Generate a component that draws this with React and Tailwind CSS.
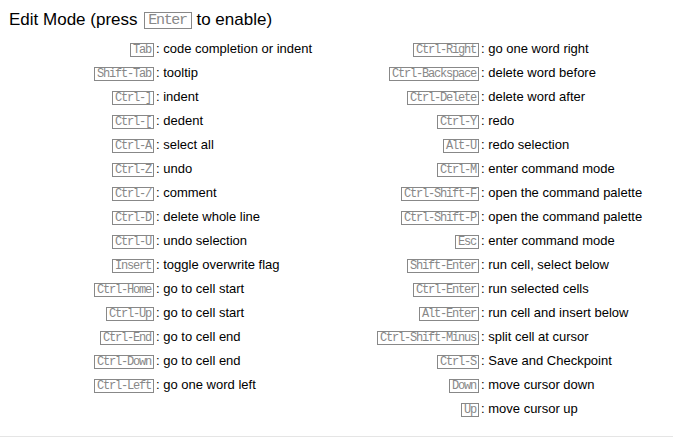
import React from 'react';

const left = [
  ['Tab', 'code completion or indent'],
  ['Shift-Tab', 'tooltip'],
  ['Ctrl-]', 'indent'],
  ['Ctrl-[', 'dedent'],
  ['Ctrl-A', 'select all'],
  ['Ctrl-Z', 'undo'],
  ['Ctrl-/', 'comment'],
  ['Ctrl-D', 'delete whole line'],
  ['Ctrl-U', 'undo selection'],
  ['Insert', 'toggle overwrite flag'],
  ['Ctrl-Home', 'go to cell start'],
  ['Ctrl-Up', 'go to cell start'],
  ['Ctrl-End', 'go to cell end'],
  ['Ctrl-Down', 'go to cell end'],
  ['Ctrl-Left', 'go one word left'],
];

const right = [
  ['Ctrl-Right', 'go one word right'],
  ['Ctrl-Backspace', 'delete word before'],
  ['Ctrl-Delete', 'delete word after'],
  ['Ctrl-Y', 'redo'],
  ['Alt-U', 'redo selection'],
  ['Ctrl-M', 'enter command mode'],
  ['Ctrl-Shift-F', 'open the command palette'],
  ['Ctrl-Shift-P', 'open the command palette'],
  ['Esc', 'enter command mode'],
  ['Shift-Enter', 'run cell, select below'],
  ['Ctrl-Enter', 'run selected cells'],
  ['Alt-Enter', 'run cell and insert below'],
  ['Ctrl-Shift-Minus', 'split cell at cursor'],
  ['Ctrl-S', 'Save and Checkpoint'],
  ['Down', 'move cursor down'],
  ['Up', 'move cursor up'],
];

function Kbd({ children }) {
  return (
    <kbd className="inline-block border border-[#888] pl-[2px] pr-[2px] text-[12px] leading-[12px] tracking-[-1.2px] text-[#888] font-['Liberation_Mono',monospace]">
      {children}
    </kbd>
  );
}

function Column({ rows, width }) {
  return (
    <div className="flex flex-col" style={{ width }}>
      {rows.map(([k, d], i) => (
        <div key={i} className="flex h-6 items-center whitespace-nowrap">
          <span className="w-[154px] shrink-0 text-right">
            <Kbd>{k}</Kbd>
          </span>
          <span className="pl-[2px]">: {d}</span>
        </div>
      ))}
    </div>
  );
}

export default function App() {
  return (
    <div className="w-[673px] h-[438px] bg-white overflow-hidden font-['Liberation_Sans',Arial,sans-serif] text-black">
      <div className="h-[437px] border-b border-[#e5e5e5]">
        <div className="pt-[10px] pl-[9px] h-[30px] text-[17px] leading-[20px] flex items-center whitespace-nowrap">
          Edit Mode (press&nbsp;
          <kbd className="ml-[2px] inline-block border border-[#888] pl-[3px] pr-[4px] text-[15px] leading-[15px] tracking-[-1.3px] text-[#888] font-['Liberation_Mono',monospace]">
            Enter
          </kbd>
          &nbsp;to enable)
        </div>
        <div className="mt-[7px] flex text-[13px]">
          <Column rows={left} width={325} />
          <Column rows={right} width={348} />
        </div>
      </div>
    </div>
  );
}
